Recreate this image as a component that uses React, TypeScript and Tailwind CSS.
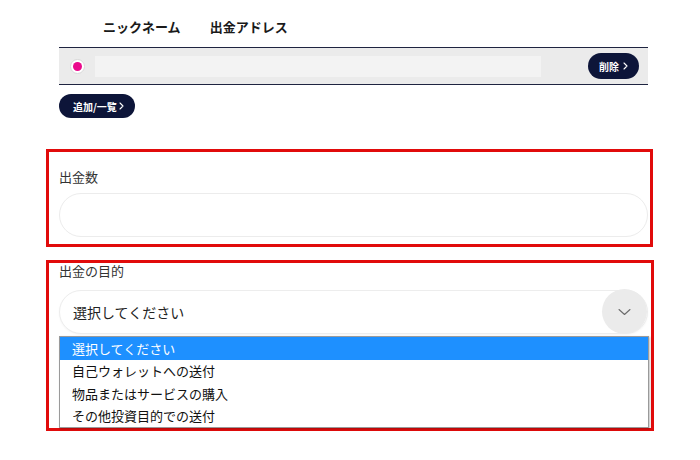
import React from "react";

const Chev = ({ className = "" }: { className?: string }) => (
  <svg className={className} width="5" height="8" viewBox="0 0 5 8" fill="none">
    <path d="M1 1l3 3-3 3" stroke="white" strokeWidth="1.1" strokeLinecap="round" strokeLinejoin="round" />
  </svg>
);

export default function App() {
  const options = ["選択してください", "自己ウォレットへの送付", "物品またはサービスの購入", "その他投資目的での送付"];
  return (
    <div
      className="w-[700px] h-[460px] bg-white overflow-hidden text-[#333]"
      style={{ fontFamily: '"Noto Sans CJK JP", "Noto Sans", sans-serif' }}
    >
      {/* header */}
      <div className="flex items-center h-[47px] pt-[7px] pl-[103px] gap-[29px] text-[13px] font-bold text-[#1a1a1a]">
        <span>ニックネーム</span>
        <span>出金アドレス</span>
      </div>

      {/* row */}
      <div className="ml-[59px] w-[589px] h-[38px] border-y border-[#1e2440] bg-[#ebebeb] flex items-center">
        <div className="ml-[11px] w-[15px] h-[15px] rounded-full bg-white border border-[#d8d8d8] flex items-center justify-center">
          <div className="w-[9px] h-[9px] rounded-full bg-[#ea0a8c]" />
        </div>
        <div className="ml-[10px] w-[446px] h-[21px] bg-[#f3f3f3]" />
        <button className="ml-auto mr-[9px] w-[51px] h-[26px] rounded-full bg-[#0d1539] text-white text-[10px] font-bold flex items-center justify-center gap-[4px]">
          <span>削除</span>
          <Chev />
        </button>
      </div>

      {/* add */}
      <button className="mt-[9px] ml-[59px] w-[76px] h-[24px] rounded-full bg-[#0d1539] text-white text-[10px] font-bold flex items-center pl-[14px] gap-[2px]">
        <span>追加/一覧</span>
        <Chev />
      </button>

      {/* box 1 */}
      <div className="mt-[31px] ml-[46px] w-[607px] h-[98px] border-[3px] border-[#e10b0b] pl-[10px] pt-[15px]">
        <div className="text-[13px] leading-[20px] text-[#333]">出金数</div>
        <div className="mt-[6px] w-[589px] h-[44px] rounded-full border border-[#ececec] bg-white" />
      </div>

      {/* box 2 */}
      <div className="mt-[13px] ml-[46px] w-[608px] border-[3px] border-[#e10b0b] pl-[10px]">
        <div className="text-[13px] leading-[16px] text-[#333]">出金の目的</div>
        <div className="relative mt-[11px] w-[589px] h-[44px] rounded-full border border-[#ededed] bg-white flex items-center pl-[13px] text-[14px] text-[#222] shadow-[0_1px_2px_rgba(0,0,0,0.04)]">
          <span>選択してください</span>
          <div className="absolute right-0 top-[-2px] w-[45px] h-[45px] rounded-full bg-[#ebebeb] flex items-center justify-center">
            <svg width="13" height="8" viewBox="0 0 13 8" fill="none">
              <path d="M1 1.5l5.5 5 5.5-5" stroke="#6b6b6b" strokeWidth="1.1" strokeLinecap="round" strokeLinejoin="round" />
            </svg>
          </div>
        </div>
        <div className="mt-[2px] w-[590px] border border-[#9a9a9a] bg-white shadow-[1px_1px_2px_rgba(0,0,0,0.25)]">
          {options.map((o, i) => (
            <div
              key={o}
              className={
                i === 0
                  ? "h-[22.5px] flex items-center pl-[12px] text-[13px] bg-[#1e90ff] text-white"
                  : "h-[22.5px] flex items-center pl-[12px] text-[13px] text-[#111]"
              }
            >
              {o}
            </div>
          ))}
        </div>
      </div>
    </div>
  );
}
